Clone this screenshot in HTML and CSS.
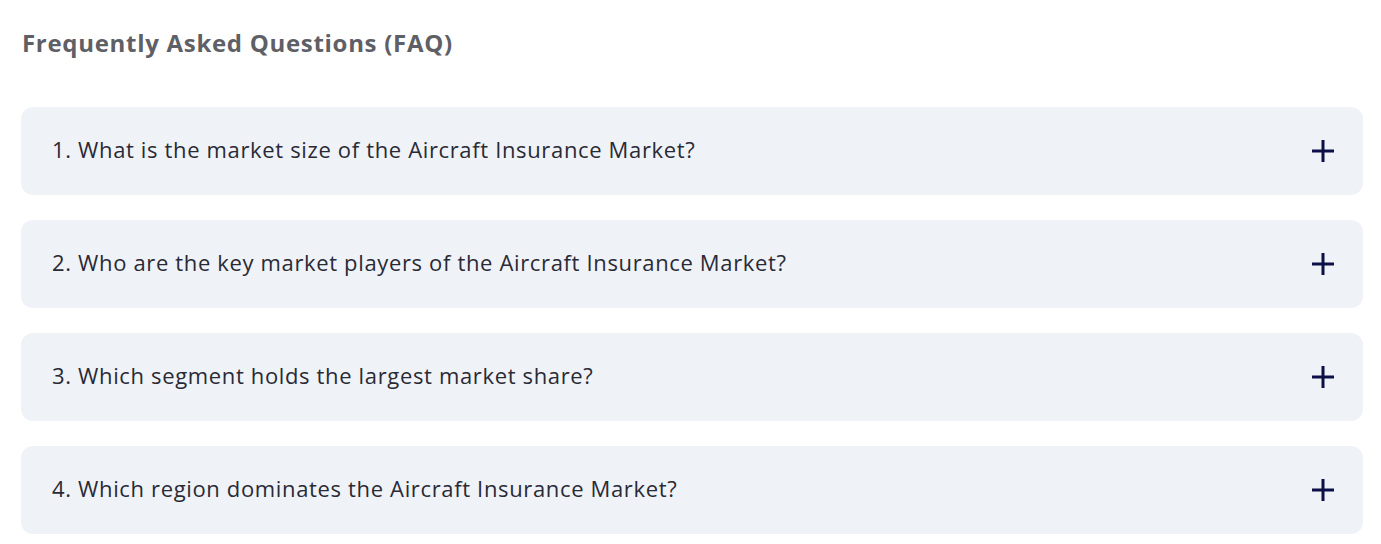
FILE: index.html
```html
<!DOCTYPE html>
<html lang="en">

<head>
    <meta charset="UTF-8">
    <meta name="viewport" content="width=device-width, initial-scale=1.0">
    <title>Frequently Asked Questions</title>
    <link rel="stylesheet" href="styles.css">
</head>

<body>
<div class="faq">
    <h2 class="faq-title">Frequently Asked Questions (FAQ)</h2>
    <div class="faq-list">
        <div class="faq-item">
            <span class="faq-question">1. What is the market size of the Aircraft Insurance Market?</span>
            <svg class="faq-icon" viewBox="0 0 22 22"><path d="M11 0V22M0 11H22"/></svg>
        </div>
        <div class="faq-item">
            <span class="faq-question">2. Who are the key market players of the Aircraft Insurance Market?</span>
            <svg class="faq-icon" viewBox="0 0 22 22"><path d="M11 0V22M0 11H22"/></svg>
        </div>
        <div class="faq-item">
            <span class="faq-question">3. Which segment holds the largest market share?</span>
            <svg class="faq-icon" viewBox="0 0 22 22"><path d="M11 0V22M0 11H22"/></svg>
        </div>
        <div class="faq-item">
            <span class="faq-question">4. Which region dominates the Aircraft Insurance Market?</span>
            <svg class="faq-icon" viewBox="0 0 22 22"><path d="M11 0V22M0 11H22"/></svg>
        </div>
    </div>
</div>
</body>

</html>
```

FILE: styles.css
```css
body {
    margin: 0;
    background: #fff;
    font-family: "Open Sans", sans-serif;
}

.faq {
    padding: 27px 18px 0 21px;
}

.faq-title {
    margin: 0 0 48px 1px;
    font-size: 24px;
    font-weight: 700;
    line-height: 32px;
    letter-spacing: 0.7px;
    color: #5f5f66;
}

.faq-list {
    display: flex;
    flex-direction: column;
    gap: 25px;
}

.faq-item {
    display: flex;
    align-items: center;
    justify-content: space-between;
    height: 88px;
    padding: 0 29px 0 31px;
    background-color: #eff3f8;
    border-radius: 12px;
}

.faq-question {
    margin-bottom: 4px;
    font-size: 22px;
    letter-spacing: 0.65px;
    color: #2a2a35;
}

.faq-icon {
    width: 22px;
    height: 22px;
    fill: none;
    stroke: #0d1046;
    stroke-width: 3;
}
```
